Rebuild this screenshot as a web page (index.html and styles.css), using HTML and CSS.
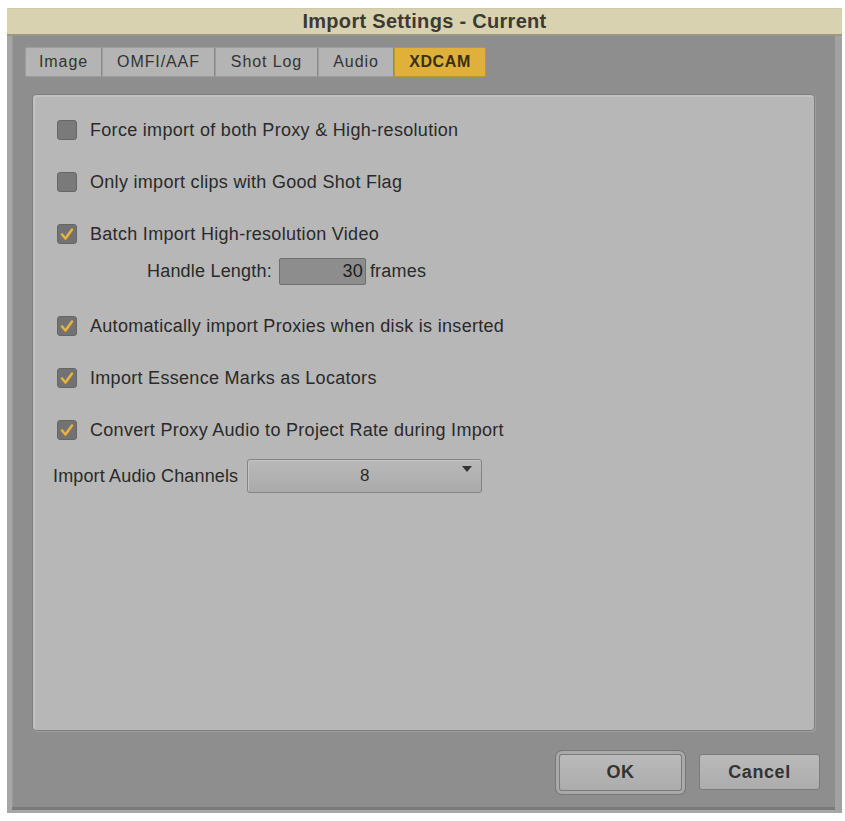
FILE: index.html
```html
<!DOCTYPE html>
<html>
<head>
<meta charset="utf-8">
<title>Import Settings - Current</title>
<link rel="stylesheet" href="styles.css">
</head>
<body>
<div class="window">
  <div class="titlebar">Import Settings - Current</div>
  <div class="body">
    <div class="tabs">
      <div class="tab tab-image">Image</div>
      <div class="tab tab-omfi">OMFI/AAF</div>
      <div class="tab tab-shot">Shot Log</div>
      <div class="tab tab-audio">Audio</div>
      <div class="tab tab-xdcam active">XDCAM</div>
    </div>
    <div class="panel">
      <div class="opt">
        <span class="cb"></span>
        <span class="lbl">Force import of both Proxy &amp; High-resolution</span>
      </div>
      <div class="opt">
        <span class="cb"></span>
        <span class="lbl">Only import clips with Good Shot Flag</span>
      </div>
      <div class="opt opt-tight">
        <span class="cb checked"><svg viewBox="0 0 20 20" width="20" height="20"><polyline points="5,10.5 8.5,14.5 15,5.5" fill="none" stroke="#e9b23c" stroke-width="2.6" stroke-linecap="round" stroke-linejoin="round"/></svg></span>
        <span class="lbl">Batch Import High-resolution Video</span>
      </div>
      <div class="handle">
        <span class="hlbl">Handle Length:</span>
        <span class="field">30</span>
        <span class="unit">frames</span>
      </div>
      <div class="opt">
        <span class="cb checked"><svg viewBox="0 0 20 20" width="20" height="20"><polyline points="5,10.5 8.5,14.5 15,5.5" fill="none" stroke="#e9b23c" stroke-width="2.6" stroke-linecap="round" stroke-linejoin="round"/></svg></span>
        <span class="lbl">Automatically import Proxies when disk is inserted</span>
      </div>
      <div class="opt">
        <span class="cb checked"><svg viewBox="0 0 20 20" width="20" height="20"><polyline points="5,10.5 8.5,14.5 15,5.5" fill="none" stroke="#e9b23c" stroke-width="2.6" stroke-linecap="round" stroke-linejoin="round"/></svg></span>
        <span class="lbl">Import Essence Marks as Locators</span>
      </div>
      <div class="opt opt-last">
        <span class="cb checked"><svg viewBox="0 0 20 20" width="20" height="20"><polyline points="5,10.5 8.5,14.5 15,5.5" fill="none" stroke="#e9b23c" stroke-width="2.6" stroke-linecap="round" stroke-linejoin="round"/></svg></span>
        <span class="lbl">Convert Proxy Audio to Project Rate during Import</span>
      </div>
      <div class="channels">
        <span class="clbl">Import Audio Channels</span>
        <div class="select">
          <span class="sval">8</span>
          <span class="arrow"></span>
        </div>
      </div>
    </div>
    <div class="footer">
      <button class="btn btn-default">OK</button>
      <button class="btn">Cancel</button>
    </div>
  </div>
</div>
</body>
</html>
```
FILE: styles.css
```css
html, body {
  margin: 0;
  padding: 0;
  background: #ffffff;
}
body {
  font-family: "Liberation Sans", Arial, sans-serif;
  color: #2a2a2a;
}
.window {
  margin: 8px 0 0 7px;
  width: 835px;
  height: 805px;
  display: flex;
  flex-direction: column;
}
.titlebar {
  box-sizing: border-box;
  height: 28px;
  background: #d8d2b0;
  border-top: 1px solid #cfc9a8;
  border-bottom: 2px solid #9a9888;
  text-align: center;
  font-weight: bold;
  font-size: 20px;
  letter-spacing: 0.3px;
  line-height: 25px;
  color: #3b3b34;
}
.body {
  flex: 1;
  background: #8e8e8e;
  border-left: 5px solid #a6a6a6;
  border-right: 7px solid #a2a2a2;
  border-bottom: 3px solid #a8a8a8;
  box-shadow: inset 0 -3px 0 #7a7a7a, inset 1px 0 0 #9a9a9a;
  display: flex;
  flex-direction: column;
}
.tabs {
  display: flex;
  margin: 11px 0 0 13px;
  height: 30px;
}
.tab {
  box-sizing: border-box;
  height: 30px;
  background: #b4b4b4;
  border: 1px solid #9c9c9c;
  border-right-color: #8a8a8a;
  font-size: 16px;
  line-height: 28px;
  text-align: center;
  color: #333;
  letter-spacing: 0.9px;
}
.tab-image { width: 77px; border-radius: 2px 0 0 2px; }
.tab-omfi { width: 113px; }
.tab-shot { width: 103px; }
.tab-audio { width: 76px; }
.tab-xdcam { width: 92px; border-radius: 0 2px 2px 0; }
.tab.active {
  background: #dfb13a;
  border-color: #c0962c;
  font-weight: bold;
  color: #3a2f10;
  letter-spacing: 0.6px;
}
.panel {
  margin: 17px 20px 0 20px;
  height: 637px;
  box-sizing: border-box;
  background: #b7b7b7;
  border: 1px solid #7e7e7e;
  border-radius: 4px;
  box-shadow: inset 2px 2px 0 #c2c2c2, 1px 1px 0 #9e9e9e;
  padding: 25px 0 0 24px;
  display: flex;
  flex-direction: column;
}
.opt {
  display: flex;
  align-items: center;
  height: 20px;
  margin-bottom: 32px;
}
.opt-tight { margin-bottom: 14px; }
.opt-last { margin-bottom: 19px; }
.cb {
  width: 20px;
  height: 20px;
  box-sizing: border-box;
  background: #7a7a7a;
  border: 1px solid #666;
  border-radius: 3px;
  margin-right: 13px;
  flex: none;
  position: relative;
}
.cb.checked {
  background: #727272;
}
.cb svg {
  position: absolute;
  left: -1px;
  top: -1px;
}
.lbl {
  font-size: 18px;
  letter-spacing: 0.3px;
  white-space: nowrap;
}
.handle {
  display: flex;
  align-items: center;
  height: 27px;
  margin: 0 0 31px 90px;
  font-size: 18px;
  letter-spacing: 0.2px;
}
.hlbl {
  margin-right: 7px;
}
.field {
  box-sizing: border-box;
  width: 87px;
  height: 27px;
  background: #8d8d8d;
  border: 1px solid #6f6f6f;
  border-radius: 2px;
  text-align: right;
  padding-right: 2px;
  line-height: 25px;
  color: #1e1e1e;
}
.unit {
  margin-left: 4px;
}
.channels {
  display: flex;
  align-items: center;
  margin-left: -4px;
  height: 34px;
}
.clbl {
  font-size: 18px;
  letter-spacing: 0.15px;
  margin-right: 9px;
  white-space: nowrap;
}
.select {
  position: relative;
  box-sizing: border-box;
  width: 235px;
  height: 34px;
  background: linear-gradient(#b9b9b9, #aaaaaa);
  border: 1px solid #848484;
  border-radius: 3px;
  box-shadow: inset 1px 1px 0 #c4c4c4;
  text-align: center;
  font-size: 17px;
  line-height: 32px;
}
.arrow {
  position: absolute;
  right: 9px;
  top: 6px;
  width: 0;
  height: 0;
  border-left: 5px solid transparent;
  border-right: 5px solid transparent;
  border-top: 6px solid #333;
}
.footer {
  display: flex;
  justify-content: flex-end;
  gap: 17px;
  padding: 23px 15px 0 0;
}
.btn {
  box-sizing: border-box;
  width: 121px;
  height: 36px;
  background: linear-gradient(#bababa, #acacac);
  border: 1px solid #7c7c7c;
  border-radius: 3px;
  font-family: "Liberation Sans", Arial, sans-serif;
  font-weight: bold;
  font-size: 18px;
  letter-spacing: 0.6px;
  color: #333;
  padding: 0;
}
.btn-default {
  width: 123px;
  height: 37px;
  box-shadow: 0 0 0 3px #a9a9a9, 0 0 0 4px #777;
}
```
